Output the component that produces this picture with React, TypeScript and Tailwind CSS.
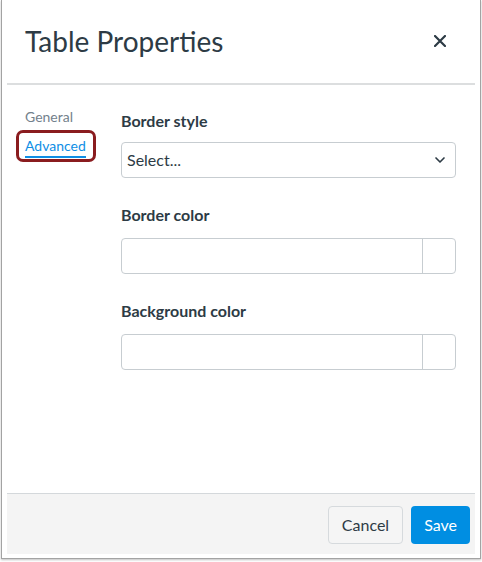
import { ChevronDown } from "lucide-react";

const fields = ["Border color", "Background color"];

function ColorInput() {
  return (
    <div className="flex h-[36px] w-[335px] rounded-[4px] border border-[#c7cdd1] bg-white">
      <div className="flex-1" />
      <div className="w-[33px] border-l border-[#c7cdd1]" />
    </div>
  );
}

export default function App() {
  return (
    <div className="h-[562px] w-[482px] bg-white font-['Lato','Noto_Sans',sans-serif] text-[#2d3b45]">
      <div className="ml-px flex h-[559px] w-[480px] flex-col border-x border-b border-[#a3a3a3] px-[5px] pb-[4px] shadow-[0_1px_2px_rgba(0,0,0,0.25)]">
        <header className="flex h-[85px] shrink-0 items-center justify-between border-b-2 border-[#dcdedf] pb-[2px] pl-[18px] pr-[29px]">
          <h1 className="text-[28px] leading-[34px] font-normal">Table Properties</h1>
          <svg width="12" height="12" viewBox="0 0 12 12" className="mt-[1px]">
            <path d="M1 1L11 11M11 1L1 11" stroke="#2d3b45" strokeWidth="2.2" strokeLinecap="round" />
          </svg>
        </header>

        <section className="flex flex-1 pl-[18px] pt-[26px]">
          <nav className="flex w-[96px] flex-col text-[14px] leading-[20px]">
            <span className="mt-[-4px] text-[#73818c]">General</span>
            <span className="relative mt-[9px] self-start">
              <span className="inline-block border-b-2 border-[#0e8ee5] text-[#0e8ee5]">Advanced</span>
              <span className="absolute -left-[9px] -top-[6px] h-[32px] w-[80px] rounded-[7px] border-[3px] border-[#8a1c1f]" />
            </span>
          </nav>

          <div className="flex flex-col">
            <label className="text-[16px] leading-[20px] font-bold">Border style</label>
            <div className="mt-[11px] flex h-[36px] w-[335px] items-center justify-between rounded-[4px] border border-[#c7cdd1] bg-white pl-[5px] pr-[7px]">
              <span className="text-[16px] leading-[20px]">Select...</span>
              <ChevronDown size={16} strokeWidth={2.5} color="#2d3b45" />
            </div>

            {fields.map((name) => (
              <div key={name} className="mt-[27px] flex flex-col">
                <label className="text-[16px] leading-[20px] font-bold">{name}</label>
                <div className="mt-[13px]">
                  <ColorInput />
                </div>
              </div>
            ))}
          </div>
        </section>

        <footer className="flex h-[61px] shrink-0 items-start justify-end gap-[8px] border-t border-[#d4d8db] bg-[#f4f4f4] pr-[5px] pt-[12px]">
          <button className="h-[38px] rounded-[4px] border border-[#d6dadd] bg-[#f5f5f5] px-[13px] text-[16px] text-[#2d3b45]">
            Cancel
          </button>
          <button className="h-[38px] rounded-[4px] bg-[#008ee2] px-[13px] text-[16px] text-white">Save</button>
        </footer>
      </div>
    </div>
  );
}
